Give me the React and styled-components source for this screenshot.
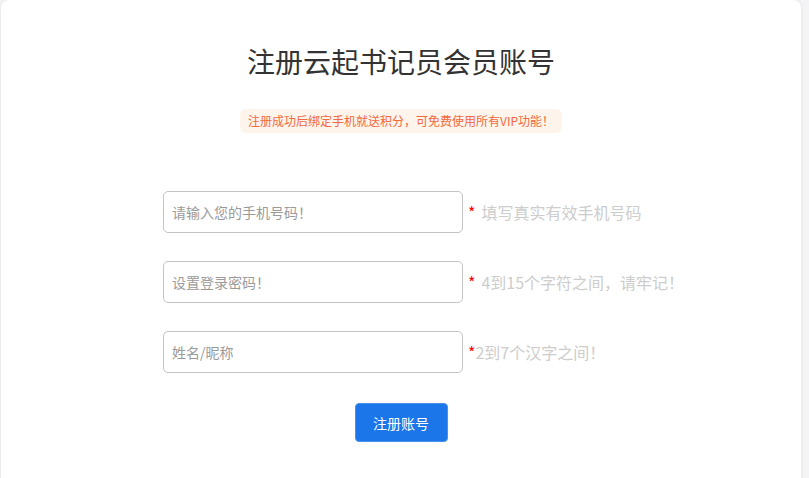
import React from "react";
import styled, { createGlobalStyle } from "styled-components";

const Global = createGlobalStyle`
  html, body { margin: 0; padding: 0; }
  body {
    background: #f4f4f6;
    font-family: "Noto Sans CJK SC", "Noto Sans", "Liberation Sans", sans-serif;
    text-spacing-trim: space-all;
  }
`;

const Card = styled.div`
  box-sizing: border-box;
  width: 800px;
  min-height: 520px;
  margin-left: 1px;
  background: #fff;
  border-radius: 8px 8px 0 0;
  box-shadow: 0 0 4px rgba(0, 0, 0, 0.08);
  padding-top: 40px;
  display: flex;
  flex-direction: column;
  align-items: center;
`;

const Title = styled.h1`
  margin: 0;
  font-size: 28px;
  line-height: 42px;
  font-weight: 400;
  color: #333;
`;

const Notice = styled.div`
  margin-top: 27px;
  padding: 0 8px;
  height: 24px;
  line-height: 24px;
  font-size: 12px;
  color: #f2693f;
  background: #fdf4ec;
  border-radius: 6px;
`;

const Form = styled.form`
  width: 476px;
  margin-top: 58px;
  display: flex;
  flex-direction: column;
  gap: 28px;
`;

const Row = styled.div`
  display: flex;
  align-items: center;
`;

const Input = styled.input`
  box-sizing: border-box;
  width: 300px;
  height: 42px;
  flex: none;
  border: 1px solid #c4c4c4;
  border-radius: 5px;
  padding: 0 8px;
  font-family: inherit;
  font-size: 14px;
  color: #333;
  outline: none;
  &::placeholder { color: #9a9a9a; }
`;

const Hint = styled.span`
  margin-left: 5px;
  white-space: nowrap;
  font-size: 16px;
  color: #cdcdcd;
`;

const Star = styled.span`
  color: #f00;
  margin-right: ${(p) => (p.$tight ? "0" : "6px")};
`;

const Submit = styled.button`
  margin-top: 30px;
  width: 93px;
  height: 39px;
  border: 1px solid #4a91ea;
  border-radius: 4px;
  background: #1a76e9;
  color: #fff;
  font-family: inherit;
  font-size: 14px;
  cursor: pointer;
`;

const fields = [
  { placeholder: "请输入您的手机号码！", type: "text", hint: "填写真实有效手机号码" },
  { placeholder: "设置登录密码！", type: "password", hint: "4到15个字符之间，请牢记！" },
  { placeholder: "姓名/昵称", type: "text", hint: "2到7个汉字之间！", tight: true },
];

export default function App() {
  return (
    <>
      <Global />
      <Card>
        <Title>注册云起书记员会员账号</Title>
        <Notice>注册成功后绑定手机就送积分，可免费使用所有VIP功能！</Notice>
        <Form onSubmit={(e) => e.preventDefault()}>
          {fields.map((f) => (
            <Row key={f.placeholder}>
              <Input type={f.type} placeholder={f.placeholder} />
              <Hint>
                <Star $tight={f.tight}>*</Star>
                {f.hint}
              </Hint>
            </Row>
          ))}
        </Form>
        <Submit type="button">注册账号</Submit>
      </Card>
    </>
  );
}
